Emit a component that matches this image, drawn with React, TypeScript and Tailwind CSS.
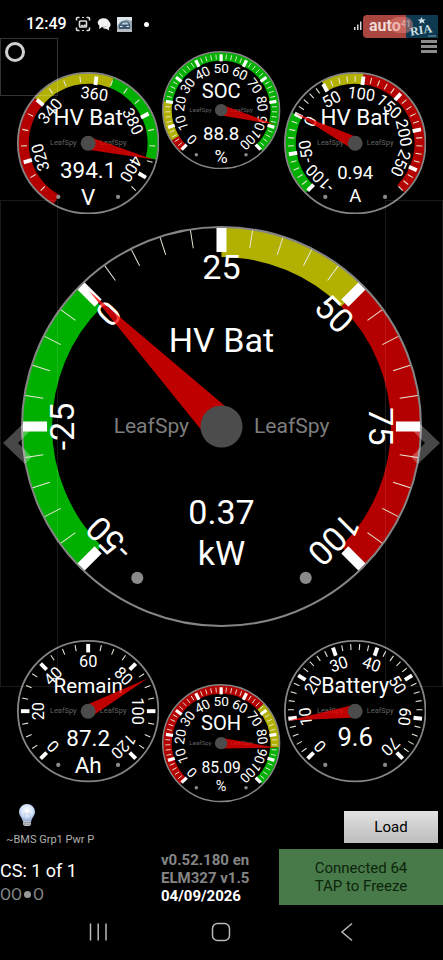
import React from 'react';

interface Band {
  from: number;
  to: number;
  color: string;
}

interface GaugeProps {
  title: string;
  value: string;
  unit?: string;
  reading: number;
  min: number;
  max: number;
  firstLabel?: number;
  major: number;
  minor: number;
  bands?: Band[];
  large?: boolean;
  titleSize?: number;
  titleY?: number;
  valueSize?: number;
  valueY?: number;
  unitSize?: number;
  unitY?: number;
}

const RED = '#b40000';
const YELLOW = '#b2b000';
const GREEN = '#00b000';

// angle is in degrees, clockwise from twelve o'clock
function polar(angle: number, r: number) {
  const a = (angle * Math.PI) / 180;
  return { x: Math.sin(a) * r, y: -Math.cos(a) * r };
}

function bandPath(a0: number, a1: number, inner: number, outer: number) {
  const big = a1 - a0 > 180 ? 1 : 0;
  const p1 = polar(a0, outer);
  const p2 = polar(a1, outer);
  const p3 = polar(a1, inner);
  const p4 = polar(a0, inner);
  return `M${p1.x} ${p1.y}A${outer} ${outer} 0 ${big} 1 ${p2.x} ${p2.y}L${p3.x} ${p3.y}A${inner} ${inner} 0 ${big} 0 ${p4.x} ${p4.y}Z`;
}

function range(from: number, to: number, step: number) {
  const out: number[] = [];
  for (let v = from; v <= to; v += step) out.push(v);
  return out;
}

const Gauge: React.FC<GaugeProps> = ({
  title, value, unit, reading, min, max, major, minor,
  firstLabel = min,
  bands = [],
  large = false,
  titleSize = 63,
  titleY = -50,
  valueSize = 63,
  valueY = 98,
  unitSize = 63,
  unitY = 175,
}) => {
  const toAngle = (v: number) => -135 + ((v - min) / (max - min)) * 270;
  const labels = range(firstLabel, max, major);
  const minors = range(min, max, minor).filter(v => !labels.includes(v));
  const dial = large
    ? { stroke: 2, bandIn: 169, bandOut: 199, tickOut: 198, majorIn: 174, minorIn: 180, majorW: 10, minorW: 1, font: 34, labelR: 147, dim: '#7d7d7d' }
    : { stroke: 5, bandIn: 167, bandOut: 197, tickOut: 189, majorIn: 165, minorIn: 172, majorW: 11, minorW: 3, font: 46, labelR: 124, dim: '#606060' };

  return (
    <svg viewBox="-200 -200 400 400" className="block w-full aspect-square" role="img" aria-label={`${title} ${value} ${unit ?? ''}`}>
      <circle r={200 - dial.stroke / 2} fill="#000" />
      {bands.map(b => (
        <path key={b.from} d={bandPath(toAngle(b.from), toAngle(b.to), dial.bandIn, dial.bandOut)} fill={b.color} />
      ))}
      <circle r={200 - dial.stroke / 2} fill="none" stroke="#858585" strokeWidth={dial.stroke} />
      {minors.map(v => (
        <line key={v} y1={-dial.tickOut} y2={-dial.minorIn} stroke="#e8e8d8" strokeWidth={dial.minorW} transform={`rotate(${toAngle(v)})`} />
      ))}
      {labels.map(v => (
        <g key={v} transform={`rotate(${toAngle(v)})`}>
          <line y1={-dial.tickOut} y2={-dial.majorIn} stroke="#fff" strokeWidth={dial.majorW} />
          <text y={-dial.labelR} fontSize={dial.font} fill="#fff" textAnchor="middle">{v}</text>
        </g>
      ))}
      <circle cx={-84} cy={151} r={6} fill="#8a8a8a" />
      <circle cx={84} cy={151} r={6} fill="#8a8a8a" />
      <g textAnchor="middle" fill="#fff">
        <text x={-70} y={6} fontSize={21} fill={dial.dim}>LeafSpy</text>
        <text x={70} y={6} fontSize={21} fill={dial.dim}>LeafSpy</text>
        <text y={titleY} fontSize={titleSize}>{title}</text>
        <text y={valueY} fontSize={valueSize}>{value}</text>
        {unit && <text y={unitY} fontSize={unitSize}>{unit}</text>}
      </g>
      <path d="M-18 0L0 -189L18 0Z" fill="#ff0000" fillOpacity={0.75} transform={`rotate(${toAngle(reading)})`} />
      <circle r={21} fill="#4c4c4c" />
    </svg>
  );
};

const StatusBar = () => (
  <header className="flex h-[38px] items-center gap-1.5 pt-2.5 pl-[26px] pr-[5px]">
    <span className="text-base font-medium leading-4">12:49</span>
    <svg viewBox="0 0 16 16" className="ml-0.5 size-4" fill="none" stroke="#ddd" strokeWidth="1.6">
      <path d="M1.5 4.5v-2q0-1 1-1h2M11.5 1.5h2q1 0 1 1v2M14.5 11.5v2q0 1-1 1h-2M4.5 14.5h-2q-1 0-1-1v-2" />
      <path d="M7 1.5h2M7 14.5h2" strokeWidth="1.2" />
      <rect x="4.5" y="5" width="7" height="6" rx="0.8" />
      <path d="M5 10.5l2-2 1.5 1L10 8l1.5 2.5z" fill="#ddd" stroke="none" />
    </svg>
    <svg viewBox="0 0 14 14" className="size-3.5" fill="#f2f2f2">
      <ellipse cx="6.5" cy="5.6" rx="5.8" ry="4.4" />
      <path d="M2.5 8L2 12l4-2.500z" />
      <path d="M12 4.500c2.200 2 2 5-.2 6.500l.5 2.500L9 11.800c-2 0-3-.6-3.500-1.400C9.500 10.200 12 8 12 4.500z" />
    </svg>
    <svg viewBox="0 0 15 15" className="size-[15px]">
      <rect width="15" height="15" fill="#8fa3b0" />
      <path d="M0 0h15v4L9 2.500 3 5 0 9z" fill="#dfe6ea" />
      <path d="M2 8l3-3.500h6L13 8v4H2z" fill="#3c5870" />
      <path d="M4 7.500l2-2h4.500l1 2z" fill="#b9d2e2" />
      <path d="M0 12h15v3H0z" fill="#b6bcc0" />
      <path d="M3 9.500h2.500M9.500 9.500H12" stroke="#e8eef2" strokeWidth="1.2" />
    </svg>
    <span className="ml-1.5 size-[5px] rounded-full bg-white" />
    <span className="flex-1" />
    <svg viewBox="0 0 11 12" className="-mr-2 h-3 w-[11px] shrink-0" fill="#d8d8d8">
      <rect x="0" y="9" width="1.5" height="3" />
      <rect x="3" y="6.5" width="1.5" height="5.5" />
      <rect x="6" y="3.5" width="1.5" height="8.5" />
      <rect x="9" y="0" width="1.5" height="12" />
    </svg>
    <span className="relative flex h-[23px] w-[75px] shrink-0 self-end">
      <span className="flex-1 rounded-l bg-[#a8463f] pl-1.5 text-base font-bold leading-[21px] text-[#f0d8d4]">auto</span>
      <span className="w-8 bg-[#0d3a50]">
        <svg viewBox="0 0 32 23" className="h-[23px] w-8 overflow-visible">
          <path d="M15.5 2l1.2 2.500 3-.3-2 1.800 1 2.500-2.800-1.200-2.400 1.700.4-2.700-2.400-1.500 2.900-.3z" fill="#cfe0e8" />
          <text x="4" y="19" fontSize="12" fontWeight="700" fill="#cfe0e8" className="font-[Liberation_Serif,serif]" transform="rotate(-9 15 15)">RIA</text>
          <text x="21" y="22" fontSize="4" fill="#9fb8c4">.com</text>
        </svg>
      </span>
      <span className="absolute left-[27px] top-0.5 flex h-4 w-[23px] items-center justify-end rounded-full bg-[#f08c84]/45 pr-0.5 text-[9px] font-bold text-white/40">41</span>
    </span>
  </header>
);

const Chevron: React.FC<{ flip?: boolean }> = ({ flip }) => (
  <svg viewBox="0 0 30 42" className={flip ? 'h-[42px] w-[30px] rotate-180' : 'h-[42px] w-[30px]'}>
    <path d="M0 21L22 0L29 7L15 21L29 35L22 42Z" fill="#fff" fillOpacity={0.28} />
  </svg>
);

const Dashboard = () => {
  const rowCls = 'grid grid-cols-[142fr_118fr_142fr] items-start gap-[3px] px-[17px]';
  const sideCls = 'absolute top-[162px] bottom-[116px] flex w-[58px] items-center border border-white/10';

  return (
    <main className="relative pt-[13px]">
      <div className={rowCls}>
        <div className="mt-[21px]">
          <Gauge
            title="HV Bat" value="394.1" unit="V" reading={394.1}
            min={310} max={405} firstLabel={320} major={20} minor={5}
            bands={[
              { from: 304.5, to: 340, color: RED },
              { from: 340, to: 365, color: YELLOW },
              { from: 365, to: 394, color: GREEN },
            ]}
          />
        </div>
        <Gauge
          title="SOC" value="88.8" unit="%" reading={88.8}
          min={0} max={100} major={10} minor={2}
          titleSize={68} titleY={-42} valueY={102} unitSize={61} unitY={178}
          bands={[
            { from: 0, to: 5, color: RED },
            { from: 5, to: 20, color: YELLOW },
            { from: 20, to: 100, color: GREEN },
          ]}
        />
        <div className="mt-[21px]">
          <Gauge
            title="HV Bat" value="0.94" unit="A" reading={0.94}
            min={-100} max={280} major={50} minor={10}
            valueSize={52} valueY={102} unitSize={52} unitY={164}
            bands={[
              { from: -100, to: 0, color: GREEN },
              { from: 50, to: 100, color: YELLOW },
              { from: 100, to: 280, color: RED },
            ]}
          />
        </div>
      </div>

      <div className="mt-3 px-[21px]">
        <Gauge
          large
          title="HV Bat" value="0.37" unit="kW" reading={0.37}
          min={-50} max={100} major={25} minor={5}
          titleSize={34} titleY={-74} valueSize={34} valueY={97} unitSize={34} unitY={138}
          bands={[
            { from: -50, to: 0, color: GREEN },
            { from: 25, to: 50, color: YELLOW },
            { from: 50, to: 100, color: RED },
          ]}
        />
      </div>

      <div className={`${rowCls} mt-[13px]`}>
        <Gauge
          title="Remain" value="87.2" unit="Ah" reading={87.2}
          min={0} max={120} major={20} minor={5} titleSize={58}
        />
        <div className="mt-11">
          <Gauge
            title="SOH" value="85.09" unit="%" reading={85.09}
            min={0} max={100} major={10} minor={2}
            titleSize={68} titleY={-43} valueSize={53} valueY={101} unitSize={49} unitY={163}
            bands={[
              { from: 0, to: 67.5, color: RED },
              { from: 67.5, to: 85, color: YELLOW },
              { from: 85, to: 100, color: GREEN },
            ]}
          />
        </div>
        <Gauge
          title="Battery" value="9.6" reading={9.6}
          min={0} max={70} major={10} minor={2} titleSize={60} valueSize={72}
        />
      </div>

      {/* Touch zones over the dials */}
      <button aria-label="Record" className="absolute left-0 top-0 size-[58px] border border-white/20">
        <span className="absolute left-1 top-[3px] size-5 rounded-full border-[3px] border-[#cfcfcf]" />
      </button>
      <button aria-label="Menu" className="absolute right-1.5 top-0.5 flex w-4 flex-col gap-0.5">
        <span className="h-[3px] bg-[#8c8c8c]" />
        <span className="h-[3px] bg-[#8c8c8c]" />
        <span className="h-[3px] bg-[#8c8c8c]" />
      </button>
      <button aria-label="Previous screen" className={`${sideCls} left-0 justify-start pl-0.5`}><Chevron /></button>
      <button aria-label="Next screen" className={`${sideCls} right-0 justify-end pr-0.5`}><Chevron flip /></button>
    </main>
  );
};

const App = () => (
  <div className="flex min-h-screen flex-col bg-black font-[Roboto,sans-serif] text-white">
    <StatusBar />
    <Dashboard />

    <div className="flex items-start justify-between pl-1.5 pr-[5px]">
      <div>
        <svg viewBox="0 0 18 24" className="ml-3 h-6 w-[18px]">
          <defs>
            <radialGradient id="bulb" cx="0.5" cy="0.4" r="0.6">
              <stop offset="0" stopColor="#ffffff" />
              <stop offset="0.6" stopColor="#d3e3fa" />
              <stop offset="1" stopColor="#8fa9d0" />
            </radialGradient>
          </defs>
          <path d="M9 1a8 8 0 0 1 8 8c0 3.500-3 5.500-3.500 9h-9C4 14.500 1 12.500 1 9a8 8 0 0 1 8-8z" fill="url(#bulb)" />
          <path d="M7 17.500L6 10l1.500 1.500L9 10l1.500 1.500L12 10l-1 7.500" fill="none" stroke="#b5c6e0" strokeWidth="0.6" />
          <path d="M5 18h8v3.500q-1 1.500-2.500 1.500h-3Q6 23 5 21.500z" fill="#c4c8d0" />
          <path d="M5 19.500h8M5 21.300h8" stroke="#7c828c" strokeWidth="0.7" />
        </svg>
        <div className="mt-[5px] text-[11px] leading-4 text-[#b0b0b0]">~BMS Grp1 Pwr P</div>
      </div>
      <button className="mt-2 h-8 w-[94px] bg-linear-to-b from-[#e2e2e2] to-[#bcbcbc] pt-0.5 text-[15px] text-black">Load</button>
    </div>

    <footer className="mt-px grid grid-cols-[161fr_118fr_164fr]">
      <div className="pt-3">
        <div className="text-lg leading-5">CS: 1 of 1</div>
        <div className="mt-1 flex items-center text-base leading-5 text-[#8a8a8a]">
          <span>OO</span>
          <span className="mx-0.5 size-[7px] rounded-full bg-[#9a9a9a]" />
          <span>O</span>
        </div>
      </div>
      <div className="whitespace-nowrap pt-0.5 text-[15px] font-bold leading-[18px] text-[#858585]">
        <div>v0.52.180 en</div>
        <div>ELM327 v1.5</div>
        <div className="text-white">04/09/2026</div>
      </div>
      <button className="h-14 bg-[#487a49] text-[15px] leading-[18px] text-[#0c240c]">
        Connected 64<br />TAP to Freeze
      </button>
    </footer>

    <nav className="grid h-[55px] grid-cols-3 place-items-center px-9">
      <button aria-label="Recent apps">
        <svg viewBox="0 0 20 20" className="size-5" stroke="#b8b8b8" strokeWidth="1.5">
          <path d="M2.500 1.500v17M10.200 1.500v17M18 1.500v17" />
        </svg>
      </button>
      <button aria-label="Home">
        <svg viewBox="0 0 20 20" className="size-5" fill="none" stroke="#b8b8b8" strokeWidth="1.5">
          <rect x="1.5" y="1.5" width="17" height="17" rx="5" />
        </svg>
      </button>
      <button aria-label="Back">
        <svg viewBox="0 0 20 20" className="size-5" fill="none" stroke="#b8b8b8" strokeWidth="1.5">
          <path d="M17 1.500L7 10l10 8.500" />
        </svg>
      </button>
    </nav>
  </div>
);

export default App;
